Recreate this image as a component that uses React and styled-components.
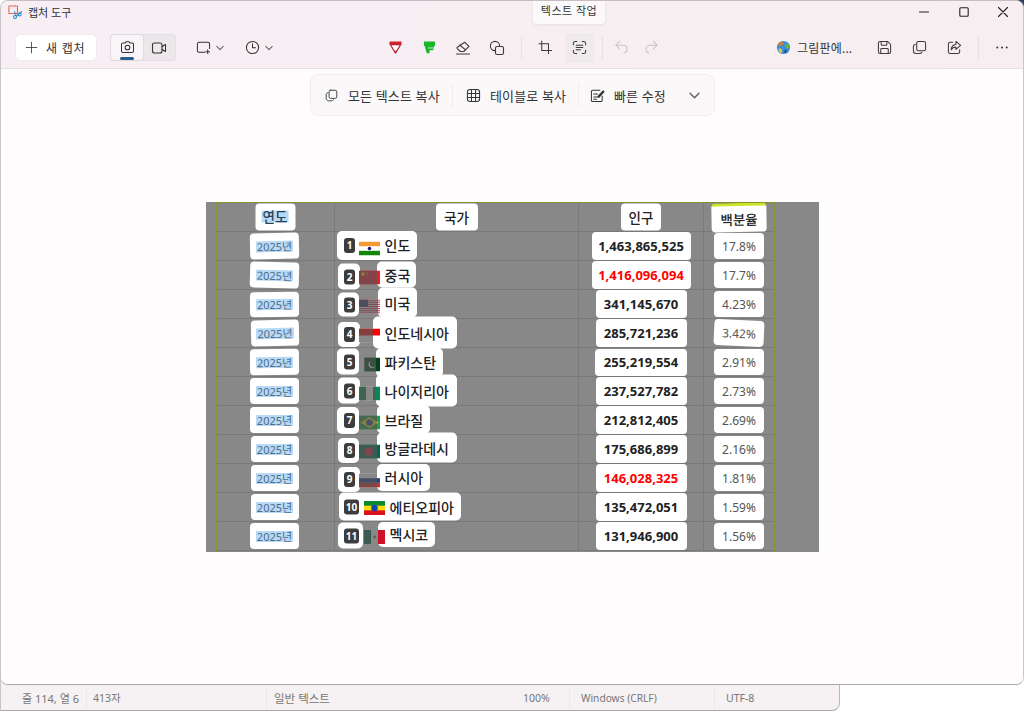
import React from "react";
import styled, { createGlobalStyle } from "styled-components";

const Global = createGlobalStyle`
  html, body { margin: 0; padding: 0; background: #fff; }
  body { font-family: "Noto Sans", "Noto Sans CJK KR", "Liberation Sans", sans-serif; overflow: hidden; }
  * { box-sizing: border-box; }
`;

const Root = styled.div`
  width: 1024px; height: 711px; display: flex; flex-direction: column; overflow: hidden;
  background: linear-gradient(90deg, #fff 846px, #2d3b66 846px) top / 100% 9px no-repeat, #fff;
`;
const CaptureWindow = styled.div`
  position: relative; z-index: 1; height: 685px; display: flex; flex-direction: column;
  border-radius: 8px; overflow: hidden; border: 1px solid #a9a6a8; border-top-color: #c6bcc1; border-left-color: #c9c5c7;
  border-right-color: #c9c5c7;
  background: #fefcfd;
`;
const Chrome = styled.div`
  background: linear-gradient(90deg, #f8eff5, #f6eef0); border-bottom: 1px solid #e5e0e3; flex: none;
`;
const TitleBar = styled.div`
  height: 22px; display: flex; align-items: center; padding-left: 7px; position: relative;
`;
const TitleText = styled.span`
  font-size: 11px; color: #333; margin-left: 5px;
`;
const WindowButtons = styled.div`
  margin-left: auto; display: flex; align-items: center; color: #222;
`;
const WindowButton = styled.div`
  width: 39.5px; display: flex; justify-content: center; align-items: center;
`;
const Tooltip = styled.div`
  position: absolute; left: 532px; top: -1px; width: 72px; height: 24px; background: #fcf9fa; border-radius: 0 0 4px 4px;
  font-size: 11px; color: #333; display: flex; justify-content: center; align-items: center; padding-bottom: 4px;
  box-shadow: 0 1px 3px rgba(0,0,0,.07); letter-spacing: .5px; z-index: 3;
`;
const Toolbar = styled.div`
  height: 45px; display: flex; align-items: center; position: relative; padding: 4px 0 0 15px;
`;
const NewButton = styled.div`
  width: 80px; height: 25px; background: #fff; border-radius: 4px; box-shadow: 0 0 2px rgba(0,0,0,.1);
  display: flex; align-items: center; padding-left: 9px; gap: 8px; font-size: 12px; color: #333; letter-spacing: .8px;
`;
const ModeSwitch = styled.div`
  margin-left: 14px; width: 66px; height: 27px; background: #ece7ea; border-radius: 4px; display: flex; padding: 1px;
  box-shadow: inset 0 0 0 1px #e4dfe2; color: #333;
`;
const ModeItem = styled.div`
  flex: 1; display: flex; justify-content: center; align-items: center; position: relative; border-radius: 3px;
  background: ${p => (p.$on ? "#f9f4f7" : "transparent")};
  box-shadow: ${p => (p.$on ? "0 0 0 1px #dfdadd" : "none")};
  &::after {
    content: ""; display: ${p => (p.$on ? "block" : "none")};
    position: absolute; left: 9px; right: 9px; bottom: 0; height: 3px; border-radius: 2px; background: #2c5d86;
  }
`;
const DropButton = styled.div`
  display: flex; align-items: center; gap: 5px; margin-left: ${p => p.$ml}px; color: #333;
`;
const Tools = styled.div`
  position: absolute; left: 377px; top: 4px; height: 41px; display: flex; align-items: center;
`;
const ToolSlot = styled.div`
  width: ${p => p.$w || 34}px; height: 30px; display: flex; justify-content: center; align-items: center; flex: none;
  margin-left: ${p => p.$ml || 0}px;
  color: ${p => (p.$muted ? "#c8c4c6" : "#3a3a3a")};
  background: ${p => (p.$hover ? "#efeaec" : "transparent")}; border-radius: 4px;
`;
const ToolDivider = styled.div`
  width: 1px; height: 24px; background: #e6e1e4; margin: 0 ${p => p.$m || 0}px;
`;
const RightTools = styled.div`
  position: absolute; right: 0; left: 770px; top: 4px; height: 41px; display: flex; align-items: center; color: #3a3a3a;
`;
const PaintLink = styled.div`
  display: flex; align-items: center; gap: 6px; font-size: 12px; color: #333; margin-left: 5px; width: 90.5px; letter-spacing: .2px; white-space: nowrap;
`;
const RightSlot = styled.div`
  width: 35px; display: flex; justify-content: center; align-items: center; flex: none;
`;
const Canvas = styled.div`
  flex: 1; display: flex; flex-direction: column; align-items: center; background: #fefcfd; position: relative;
`;
const ActionBar = styled.div`
  margin-top: 5px; width: 405px; height: 42px; border: 1px solid #f1edef; border-radius: 8px; background: #fbf8f9;
  display: flex; align-items: center; padding-left: 14px; color: #333; font-size: 13px; letter-spacing: .15px; margin-left: 1px;
`;
const ActionItem = styled.div`
  display: flex; align-items: center; gap: ${p => p.$g}px; width: ${p => p.$w}px; white-space: nowrap;
`;
const ActionSep = styled.div`
  width: 1px; height: 24px; background: #f0ecee; margin-right: ${p => p.$mr}px;
`;
const Shot = styled.div`
  margin-top: 86px; width: 613px; height: 350px; background: #888; padding-left: 9px; margin-left: 1px; flex: none; overflow: hidden;
`;
const Table = styled.div`
  width: 561px; border-top: 1px solid #84912f; border-left: 2px solid #87953c; border-right: 2px solid #87953c;
  display: grid; grid-template-columns: 118px 244px 125px 1fr; grid-auto-rows: 29px; grid-template-rows: 29px;
  height: 350px;
`;
const Cell = styled.div`
  border-right: ${p => (p.$last ? "none" : "1px solid #797979")}; border-bottom: 1px solid #797979;
  display: flex; align-items: center; justify-content: ${p => (p.$flow ? "flex-start" : "center")};
  padding-left: ${p => (p.$flow ? 2.5 : 0)}px;
`;
const Blob = styled.div`
  background: #fff; border-radius: 4px; display: flex; justify-content: center; align-items: center; flex: none;
  width: ${p => p.$w}px; height: ${p => p.$h || 26}px;
  transform: translate(${p => p.$dx || 0}px, ${p => p.$dy || 0}px) rotate(${p => p.$r || 0}deg);
`;
const HeadBlob = styled(Blob)`
  font-size: 13.5px; font-weight: 500; color: #222;
  border-top: ${p => (p.$accent ? "3px solid #cbe32a" : "none")};
`;
const Highlight = styled.span`
  background: #b9daf6; color: ${p => p.$color || "#4b6b88"}; line-height: ${p => p.$lh || 11}px; display: block; padding: 0 1px;
  font-size: ${p => p.$fs || 11}px; font-weight: ${p => p.$fw || 400};
`;
const PopBlob = styled(Blob)`
  font-size: 13px; font-weight: 700; color: ${p => (p.$red ? "#f00" : "#222")}; letter-spacing: .02px;
`;
const PctBlob = styled(Blob)`
  font-size: 12px; color: #555;
`;
const NumBlob = styled.div`
  flex: none; background: #fff; width: ${p => p.$w}px; height: ${p => p.$h}px;
  border-radius: ${p => (p.$joined ? "5px 0 0 5px" : "5px")}; display: flex; align-items: center;
  margin-left: ${p => p.$ml}px; padding-left: ${p => p.$pl}px;
  transform: translateY(${p => p.$dy}px);
`;
const Badge = styled.span`
  flex: none; background: #3c3c3c; color: #fff; font-size: 10px; font-weight: 700; border-radius: 3px; height: 15px;
  width: ${p => p.$w}px; display: flex; justify-content: center; align-items: center; line-height: 1;
`;
const FlagBox = styled.svg`
  flex: none; width: 21px; height: 14px; position: relative; z-index: 2; margin-left: ${p => p.$ml}px;
  transform: translateY(${p => p.$dy}px);
`;
const NameBlob = styled.div`
  flex: none; background: #fff; width: ${p => p.$w}px; height: ${p => p.$h}px;
  border-radius: ${p => (p.$joined ? "0 5px 5px 0" : "5px")};
  margin-left: ${p => p.$ml}px; padding-left: ${p => p.$pl}px; display: flex; align-items: center;
  font-size: 14px; font-weight: 500; color: #222; white-space: nowrap;
  transform: translateY(${p => p.$dy}px);
`;
const StatusBar = styled.div`
  margin-top: -8px; padding-top: 8px; height: 34px; width: 840px; flex: none; background: #f6f1f2; color: #777;
  border-radius: 0 0 8px 0; border-bottom: 1px solid #a9a6a8; border-right: 1px solid #b9b6b8; border-left: 1px solid #c9c5c7;
  display: flex; align-items: center;
`;
const StatusItem = styled.div`
  width: ${p => p.$w}px; padding-left: ${p => p.$pl}px; border-right: ${p => (p.$sep ? "1px solid #ebe6e8" : "none")};
  font-size: ${p => p.$fs || 10.5}px;
  height: 20px; display: flex; align-items: center; white-space: nowrap; flex: none;
`;
const Svg = styled.svg`
  display: block; flex: none; fill: none; stroke: currentColor; stroke-width: 1.1; stroke-linecap: round; stroke-linejoin: round;
`;

const I = ({ s = 16, w, children, vb = "0 0 16 16", ...rest }) => (
  <Svg width={s} height={s} viewBox={vb} strokeWidth={w} {...rest}>{children}</Svg>
);

const Snip = () => (
  <I s={15} w={1.2}>
    <rect x="1" y="1" width="9" height="8" stroke="#d8502c" strokeDasharray="1.6 1.2" />
    <circle cx="7.5" cy="12.8" r="1.6" stroke="#2f8fcf" />
    <circle cx="12.5" cy="10" r="1.6" stroke="#2f8fcf" />
    <path d="M8.5 11.5 L7 7 M9 12 L14.5 7" stroke="#2f8fcf" />
  </I>
);
const Plus = () => <I s={13}><path d="M8 1.5v13M1.5 8h13" stroke="#444" /></I>;
const Camera = () => (
  <I s={15}><path d="M5.5 3.2 6.4 1.8h3.2l.9 1.4h2.4c.8 0 1.5.7 1.5 1.5v7.1c0 .8-.7 1.5-1.5 1.5H3.1c-.8 0-1.5-.7-1.5-1.5V4.7c0-.8.7-1.5 1.5-1.5z" /><circle cx="8" cy="8" r="2.5" /></I>
);
const Video = () => (
  <I s={16}><rect x="1.5" y="3" width="9.5" height="10" rx="2" /><path d="M11 6.5 14.5 4.5v7L11 9.5" /></I>
);
const Chevron = ({ s = 8 }) => <I s={s} vb="0 0 8 8"><path d="M.8 2.4 4 5.6l3.2-3.2" stroke="#666" /></I>;
const Shape = () => (
  <I s={15}><path d="M9.5 13H3.2c-.9 0-1.7-.7-1.7-1.6V4.2c0-.9.8-1.7 1.7-1.7h9.6c.9 0 1.7.8 1.7 1.7V9" /><path d="M12.5 10.5v4M10.5 12.5h4" /></I>
);
const Clock = () => <I s={15}><circle cx="8" cy="8" r="6.5" /><path d="M8 4v4.3h3.3" /></I>;
const Pen = () => (
  <I s={13} vb="0 0 14 14">
    <path d="M.5.5h13v3.5H.5z" fill="#d8202c" stroke="none" />
    <path d="M1.5 4 7 13 12.5 4z" fill="#fff" stroke="#b92232" strokeWidth="1.3" />
    <path d="M6 10.5h2L7 13.2z" fill="#c22" stroke="none" />
  </I>
);
const Marker = () => (
  <I s={13} vb="0 0 14 14">
    <path d="M1 .5h12v5H1z" fill="#19b52b" stroke="none" />
    <path d="M2 5.5h10l-1 4.5H7v3.5L4 13l-1-3z" fill="#19b52b" stroke="none" />
    <path d="M6 7.5h5" stroke="#fff" strokeWidth=".8" />
  </I>
);
const Eraser = () => (
  <I s={16}><path d="M9.7 2.2 14 6.3 8.8 11.5H5.4L2.3 8.6c-.4-.4-.4-1 0-1.4z" /><path d="M5.2 4.7 10.9 9.4" transform="translate(-.6 .3)" /><path d="M1.5 14h13" /></I>
);
const Shapes = () => (
  <I s={16}><circle cx="6" cy="6" r="4.6" /><rect x="6.5" y="6.5" width="8" height="8" rx="1.6" fill="#f7eef2" /></I>
);
const Crop = () => (
  <I s={15}><path d="M4 1v10.2h10.5M1 4h10.2v10.5" /></I>
);
const TextAction = () => (
  <I s={15}><path d="M1.5 5V3.6c0-1.1 1-2.1 2.1-2.1H5M11 1.5h1.4c1.1 0 2.1 1 2.1 2.1V5M14.5 11v1.4c0 1.1-1 2.1-2.1 2.1H11M5 14.5H3.6c-1.1 0-2.1-1-2.1-2.1V11" /><path d="M4.5 5.5h7M4.5 8h7M4.5 10.5h4.5" /></I>
);
const Undo = () => <I s={15} w={1.3}><path d="M6 1.5 2 5.500l4 4" /><path d="M2 5.500h7.500c2.600 0 4.500 1.800 4.500 4 0 1.800-1 3.300-3 4.500" /></I>;
const Redo = () => <I s={15} w={1.3}><path d="M10 1.500l4 4-4 4" /><path d="M14 5.500H6.500C3.900 5.500 2 7.300 2 9.500c0 1.800 1 3.300 3 4.500" /></I>;
const Globe = () => (
  <I s={15}>
    <circle cx="8" cy="8" r="7" fill="#3b8fd6" stroke="none" />
    <path d="M4 2.500c2-1 3.500-.5 4 1S6.500 6 5 6.500 2.500 6 2 5z" fill="#c9803a" stroke="none" />
    <path d="M9.500 5c1.500-1 3.500-.5 4.500 1s0 3-1.500 3-3.500-2.500-3-4z" fill="#6bb24a" stroke="none" />
    <path d="M3 9c1.500-.5 3 .5 3.500 2S6 14 5 14 2.500 11 3 9z" fill="#e8c14a" stroke="none" />
    <path d="M9.500 10.500c1-.5 2 0 2 1s-1 2.300-2 2.300-1-2.800 0-3.300z" fill="#1e4f8a" stroke="none" />
  </I>
);
const Save = () => (
  <I s={15}><path d="M1.500 3.200c0-.9.8-1.700 1.700-1.700h8L14.500 4.800v8c0 .9-.8 1.700-1.700 1.700H3.200c-.9 0-1.700-.8-1.700-1.700z" /><path d="M4.500 1.500v3.300c0 .4.300.7.700.7h4.600c.4 0 .7-.3.700-.7V1.500M4 14.500V10c0-.5.400-1 1-1h6c.6 0 1 .5 1 1v4.500" /></I>
);
const Copy = ({ s = 15 }) => (
  <I s={s}><rect x="5" y="1.500" width="9.500" height="10" rx="2" /><path d="M3.500 4.500C2.300 4.800 1.500 5.800 1.500 7v4.500c0 1.700 1.300 3 3 3H8c1.200 0 2.200-.8 2.500-1.500" /></I>
);
const Share = () => (
  <I s={15}><path d="M9.500 1.500l5 4.300-5 4.200V7.500C7 7.500 5.500 8.500 4.500 10.500c0-3.500 2-5.500 5-5.800z" /><path d="M6 2.500H3.500c-1.100 0-2 .9-2 2v8c0 1.100.9 2 2 2h8c1.100 0 2-.9 2-2V10.500" /></I>
);
const More = () => (
  <I s={15}><circle cx="2.500" cy="8" r="1.100" fill="currentColor" stroke="none" /><circle cx="7.500" cy="8" r="1.100" fill="currentColor" stroke="none" /><circle cx="12.500" cy="8" r="1.100" fill="currentColor" stroke="none" /></I>
);
const Minimize = () => <I s={10} vb="0 0 10 10"><path d="M.5 5h9" /></I>;
const Maximize = () => <I s={10} vb="0 0 10 10"><rect x=".8" y=".8" width="8.400" height="8.400" rx="1" /></I>;
const CloseX = () => <I s={10} vb="0 0 10 10"><path d="M.5.500l9 9M9.500.500l-9 9" /></I>;
const TableIcon = () => (
  <I s={15}><rect x="1.500" y="1.500" width="13" height="13" rx="3" /><path d="M1.500 5.800h13M1.500 10.200h13M5.800 1.500v13M10.200 1.500v13" /></I>
);
const QuickEdit = () => (
  <I s={15} w={1.2}><path d="M10.500 2.500H3c-.8 0-1.500.7-1.500 1.500v9c0 .8.700 1.500 1.500 1.500h8.500c.8 0 1.500-.7 1.500-1.500V8.500" /><path d="M4 6.500h4M4 9.500h5M4 12h3" /><path d="M8.500 9 14 3l1 1-5.500 6z" fill="currentColor" /></I>
);

const flagArt = {
  in: <><rect width="21" height="14" fill="#fff" /><rect width="21" height="4.700" fill="#f59a33" /><rect y="9.300" width="21" height="4.700" fill="#138808" /><circle cx="10.500" cy="7" r="1.800" fill="#1a1a7a" /></>,
  cn: <><rect width="21" height="14" fill="#ee1c25" /><circle cx="4" cy="3.500" r="1.700" fill="#ff0" /><circle cx="7.500" cy="1.800" r=".5" fill="#ff0" /><circle cx="8.500" cy="4" r=".5" fill="#ff0" /></>,
  us: <><rect width="21" height="14" fill="#fff" />{[0, 2.150, 4.300, 6.450, 8.600, 10.750, 12.900].map(y => <rect key={y} y={y} width="21" height="1.080" fill="#c8304a" />)}<rect width="9" height="7.500" fill="#3c3b6e" /></>,
  id: <><rect width="21" height="14" fill="#fff" /><rect width="21" height="7" fill="#f00" /></>,
  pk: <><rect width="21" height="14" fill="#01411c" /><rect width="5.300" height="14" fill="#fff" /><circle cx="13" cy="7" r="3.500" fill="#fff" /><circle cx="14" cy="6.300" r="3.200" fill="#01411c" /></>,
  ng: <><rect width="21" height="14" fill="#fff" /><rect width="7" height="14" fill="#0a8754" /><rect x="14" width="7" height="14" fill="#0a8754" /></>,
  br: <><rect width="21" height="14" fill="#229e45" /><path d="M10.500 1.500 19.500 7l-9 5.500L1.500 7z" fill="#f8e509" /><circle cx="10.500" cy="7" r="3.300" fill="#2b49a3" /></>,
  bd: <><rect width="21" height="14" fill="#006a4e" /><circle cx="9.500" cy="7" r="4.300" fill="#e8203a" /></>,
  ru: <><rect width="21" height="14" fill="#fff" /><rect y="4.670" width="21" height="4.670" fill="#22408c" /><rect y="9.330" width="21" height="4.670" fill="#da291c" /></>,
  et: <><rect width="21" height="14" fill="#fcdd09" /><rect width="21" height="4.670" fill="#078930" /><rect y="9.330" width="21" height="4.670" fill="#da121a" /><circle cx="10.500" cy="7" r="3.300" fill="#0f47af" /></>,
  mx: <><rect width="21" height="14" fill="#fff" /><rect width="7" height="14" fill="#006847" /><rect x="14" width="7" height="14" fill="#ce1126" /><circle cx="10.500" cy="7" r="1.500" fill="#8c7a4a" /></>,
};
const Flag = ({ code, dim, ml, dy }) => (
  <FlagBox viewBox="0 0 21 14" $ml={ml} $dy={dy}>
    {flagArt[code]}
    {dim > 0 && <rect width={dim} height="14" fill="#555" fillOpacity=".7" />}
  </FlagBox>
);

const rows = [
  { y: [49, 26, 0, -1.2], name: "인도", code: "in", num: [337, 358, 231, 260, true], nm: [358, 417, 231, 260], flag: [359, 0], pop: ["1,463,865,525", 99, 28], pct: ["17.8%", 50, 0] },
  { y: [49, 26, 0, 1.5], name: "중국", code: "cn", num: [338, 360, 264, 290], nm: [377, 416, 262, 288], flag: [359, 18], pop: ["1,416,096,094", 99, 28, true], pct: ["17.7%", 50, 0] },
  { y: [49, 25, 0, -.6], name: "미국", code: "us", num: [338, 359, 293, 317], nm: [378, 417, 288, 318], flag: [359, 19], pop: ["341,145,670", 91, 28], pct: ["4.23%", 50, 0] },
  { y: [48, 26, 0, -1.2], name: "인도네시아", code: "id", num: [338, 360, 322, 347], nm: [373, 457, 317, 349], flag: [359, 14], pop: ["285,721,236", 91, 28], pct: ["3.42%", 50, 2.5] },
  { y: [49, 26, 0, -.6], name: "파키스탄", code: "pk", num: [337, 359, 349, 375], nm: [376, 443, 348, 377], flag: [359, 17], pop: ["255,219,554", 92, 27], pct: ["2.91%", 50, 0] },
  { y: [49, 26, 0, 0], name: "나이지리아", code: "ng", num: [338, 360, 378, 404], nm: [376, 457, 375, 407], flag: [359, 17], pop: ["237,527,782", 91, 28], pct: ["2.73%", 50, 0] },
  { y: [49, 26, 0, 0], name: "브라질", code: "br", num: [337, 359, 407, 434], nm: [377, 430, 406, 434], flag: [359, 18], pop: ["212,812,405", 91, 28], pct: ["2.69%", 50, 0] },
  { y: [48, 26, 0, 0], name: "방글라데시", code: "bd", num: [338, 359, 438, 463], nm: [377, 457, 433, 463], flag: [359, 18], pop: ["175,686,899", 91, 28], pct: ["2.16%", 50, 0] },
  { y: [48, 26, 0, 0], name: "러시아", code: "ru", num: [338, 360, 467, 492], nm: [377, 430, 464, 491], flag: [359, 18], pop: ["146,028,325", 91, 28, true], pct: ["1.81%", 50, 0] },
  { y: [48, 26, 0, 0], name: "에티오피아", code: "et", num: [339, 362, 493, 521, true], nm: [362, 461, 493, 521], flag: [364, 0], pop: ["135,472,051", 91, 28], pct: ["1.59%", 50, 0] },
  { y: [49, 26, 0, 0], name: "멕시코", code: "mx", num: [338, 363, 523, 549], nm: [378, 435, 522, 547], flag: [364, 14], pop: ["131,946,900", 91, 28], pct: ["1.56%", 50, 0] },
];

const CELL_LEFT = 335;
const Country = ({ r, i }) => {
  const center = 232 + 29 * i + 14.5;
  const [nl, nr, nt, nb, joined] = r.num;
  const [ml, mr, mt, mb] = r.nm;
  const [fx, dim] = r.flag;
  const wide = i >= 9;
  const textX = wide ? 389.5 : 384.5;
  return (
    <Cell $flow>
      <NumBlob $joined={joined} $w={nr - nl} $h={nb - nt} $ml={nl - CELL_LEFT - 2.5} $pl={344 - nl} $dy={(nt + nb) / 2 - center}>
        <Badge $w={wide ? 15 : 11}>{i + 1}</Badge>
      </NumBlob>
      <Flag code={r.code} dim={dim} ml={fx - nr} dy={wide ? 1 : 2.5} />
      <NameBlob $joined={joined} $w={mr - ml} $h={mb - mt} $ml={ml - fx - 21} $pl={textX - ml} $dy={(mt + mb) / 2 - center}>
        {r.name}
      </NameBlob>
    </Cell>
  );
};

export default function App() {
  return (
    <Root>
      <Global />
      <CaptureWindow>
        <Chrome>
          <TitleBar>
            <Snip />
            <TitleText>캡처 도구</TitleText>
            <Tooltip>텍스트 작업</Tooltip>
            <WindowButtons>
              <WindowButton><Minimize /></WindowButton>
              <WindowButton><Maximize /></WindowButton>
              <WindowButton><CloseX /></WindowButton>
            </WindowButtons>
          </TitleBar>
          <Toolbar>
            <NewButton><Plus />새 캡처</NewButton>
            <ModeSwitch>
              <ModeItem $on><Camera /></ModeItem>
              <ModeItem><Video /></ModeItem>
            </ModeSwitch>
            <DropButton $ml={20}><Shape /><Chevron /></DropButton>
            <DropButton $ml={21}><Clock /><Chevron /></DropButton>
            <Tools>
              <ToolSlot><Pen /></ToolSlot>
              <ToolSlot><Marker /></ToolSlot>
              <ToolSlot><Eraser /></ToolSlot>
              <ToolSlot><Shapes /></ToolSlot>
              <ToolDivider $m={6.5} />
              <ToolSlot><Crop /></ToolSlot>
              <ToolSlot $w={29} $ml={3} $hover><TextAction /></ToolSlot>
              <ToolDivider $m={7.5} />
              <ToolSlot $w={22} $muted><Undo /></ToolSlot>
              <ToolSlot $w={39} $muted><Redo /></ToolSlot>
            </Tools>
            <RightTools>
              <PaintLink><Globe />그림판에...</PaintLink>
              <RightSlot><Save /></RightSlot>
              <RightSlot><Copy /></RightSlot>
              <RightSlot><Share /></RightSlot>
              <ToolDivider $m={6} />
              <RightSlot><More /></RightSlot>
            </RightTools>
          </Toolbar>
        </Chrome>
        <Canvas>
          <ActionBar>
            <ActionItem $g={10} $w={127}><Copy s={13} />모든 텍스트 복사</ActionItem>
            <ActionSep $mr={13} />
            <ActionItem $g={9} $w={112}><TableIcon />테이블로 복사</ActionItem>
            <ActionSep $mr={11} />
            <ActionItem $g={9} $w={99}><QuickEdit />빠른 수정</ActionItem>
            <Chevron s={11} />
          </ActionBar>
          <Shot>
            <Table>
              <Cell><HeadBlob $w={40} $h={27} $dx={-.5} $dy={-.5}><Highlight $fs={13.5} $lh={12} $fw={500} $color="#2b3f52">연도</Highlight></HeadBlob></Cell>
              <Cell><HeadBlob $w={42} $h={27} $dy={-.5}>국가</HeadBlob></Cell>
              <Cell><HeadBlob $w={40} $h={27} $dy={-.5}>인구</HeadBlob></Cell>
              <Cell $last><HeadBlob $accent $w={55} $h={29} $r={-1} $dx={-.5}>백분율</HeadBlob></Cell>
              {rows.map((r, i) => (
                <React.Fragment key={r.name}>
                  <Cell>
                    <Blob $w={r.y[0]} $h={r.y[1]} $dx={-1} $dy={r.y[2]} $r={r.y[3]}><Highlight>2025년</Highlight></Blob>
                  </Cell>
                  <Country r={r} i={i} />
                  <Cell><PopBlob $w={r.pop[1]} $h={r.pop[2]} $red={r.pop[3]}>{r.pop[0]}</PopBlob></Cell>
                  <Cell $last><PctBlob $w={r.pct[1]} $h={26} $r={r.pct[2]}>{r.pct[0]}</PctBlob></Cell>
                </React.Fragment>
              ))}
            </Table>
          </Shot>
        </Canvas>
      </CaptureWindow>
      <StatusBar>
        <StatusItem $w={86} $pl={21} $sep $fs={11}>줄 114, 열 6</StatusItem>
        <StatusItem $w={180} $pl={6} $sep>413자</StatusItem>
        <StatusItem $w={243} $pl={7} $fs={11.5}>일반 텍스트</StatusItem>
        <StatusItem $w={60} $pl={13} $sep>100%</StatusItem>
        <StatusItem $w={145} $pl={11} $sep $fs={10.2}>Windows (CRLF)</StatusItem>
        <StatusItem $w={100} $pl={11}>UTF-8</StatusItem>
      </StatusBar>
    </Root>
  );
}
